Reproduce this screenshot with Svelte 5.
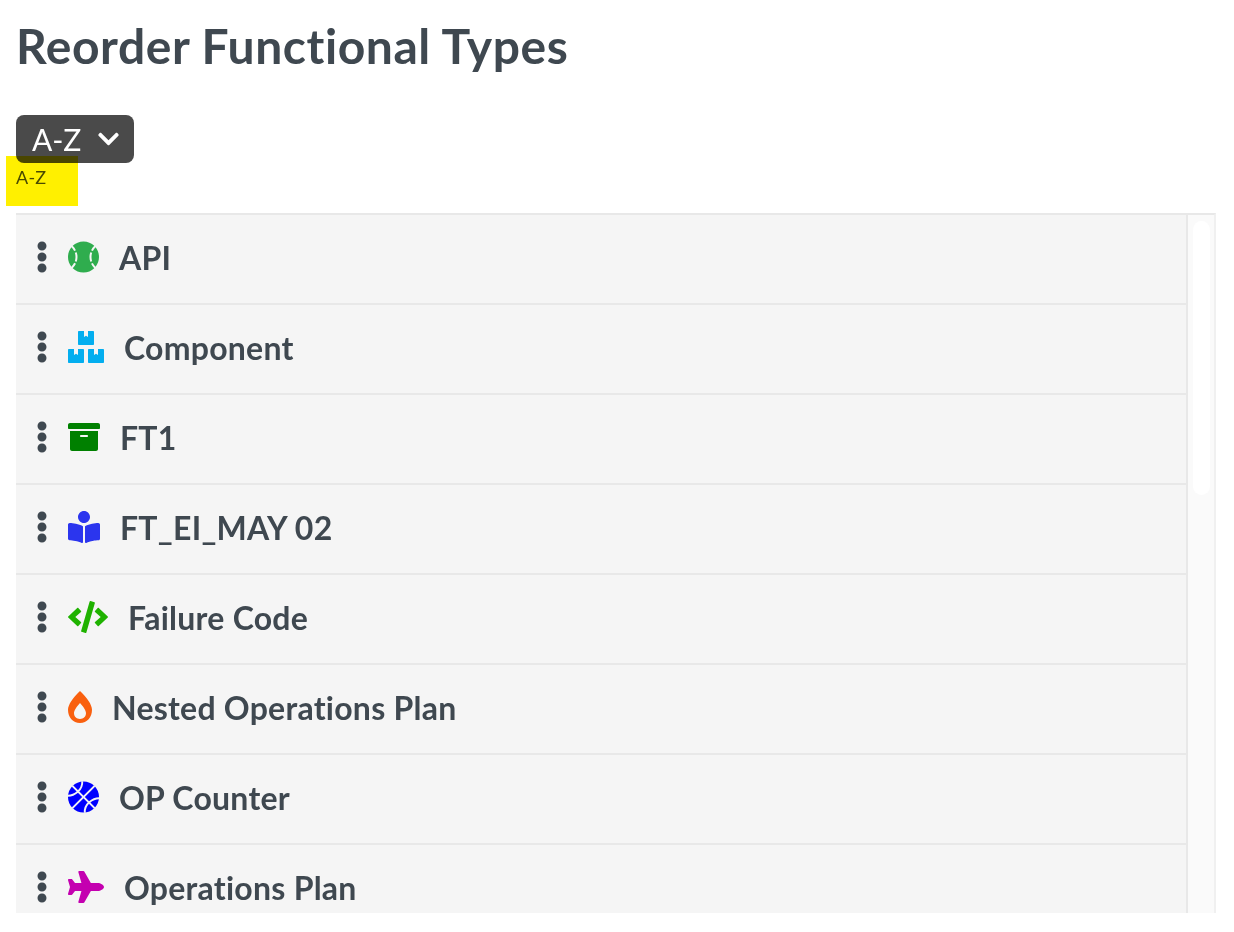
<script>
  const rows = [
    { name: 'API', icon: 'baseball', color: '#2fad4e' },
    { name: 'Component', icon: 'boxes', color: '#03aeef' },
    { name: 'FT1', icon: 'archive', color: '#008000' },
    { name: 'FT_EI_MAY 02', icon: 'reader', color: '#2b35ee' },
    { name: 'Failure Code', icon: 'code', color: '#1fb200' },
    { name: 'Nested Operations Plan', icon: 'burn', color: '#f9600f' },
    { name: 'OP Counter', icon: 'basketball', color: '#0000ff' },
    { name: 'Operations Plan', icon: 'plane', color: '#c400b0' }
  ];

  const icons = {
    baseball: { w: 496, d: 'M368.5 363.9l28.8-13.9c11.1 22.9 26 43.2 44.1 60.9 34-42.5 54.5-96.3 54.5-154.9 0-58.5-20.4-112.2-54.2-154.6-17.8 17.3-32.6 37.1-43.6 59.5l-28.7-14.1c12.8-26 30-49 50.8-69C375.6 34.7 315 8 248 8 181.1 8 120.5 34.6 75.9 77.7c20.7 19.9 37.9 42.9 50.7 68.8l-28.7 14.1c-11-22.3-25.7-42.1-43.5-59.4C20.4 143.7 0 197.4 0 256c0 58.6 20.4 112.3 54.4 154.7 18.2-17.7 33.2-38 44.3-61l28.8 13.9c-12.9 26.7-30.3 50.3-51.5 70.7 44.5 43.1 105.1 69.7 172 69.7 66.8 0 127.3-26.5 171.9-69.5-21.1-20.4-38.5-43.9-51.4-70.6zm-228.3-32l-30.5-9.8c14.9-46.4 12.7-93.8-.6-134l30.4-10c15 45.6 18 99.9.7 153.8zm216.3-153.4l30.4 10c-13.2 40.1-15.5 87.5-.6 134l-30.5 9.8c-17.3-54-14.3-108.3.7-153.8z' },
    boxes: { w: 576, d: 'M560 288h-80v96l-32-21.3-32 21.3v-96h-80c-8.8 0-16 7.2-16 16v192c0 8.8 7.2 16 16 16h224c8.8 0 16-7.2 16-16V304c0-8.8-7.2-16-16-16zm-384-64h224c8.8 0 16-7.2 16-16V16c0-8.8-7.2-16-16-16h-80v96l-32-21.3L256 96V0h-80c-8.8 0-16 7.2-16 16v192c0 8.8 7.2 16 16 16zm64 64h-80v96l-32-21.3L96 384v-96H16c-8.8 0-16 7.2-16 16v192c0 8.8 7.2 16 16 16h224c8.8 0 16-7.2 16-16V304c0-8.8-7.2-16-16-16z' },
    archive: { w: 512, d: 'M32 448c0 17.7 14.3 32 32 32h384c17.7 0 32-14.3 32-32V160H32v288zm160-212c0-6.6 5.4-12 12-12h104c6.6 0 12 5.4 12 12v8c0 6.6-5.4 12-12 12H204c-6.6 0-12-5.4-12-12v-8zM480 32H32C14.3 32 0 46.3 0 64v48c0 8.8 7.2 16 16 16h480c8.8 0 16-7.2 16-16V64c0-17.7-14.3-32-32-32z' },
    reader: { w: 512, d: 'M352 96c0-53.02-42.98-96-96-96s-96 42.98-96 96 42.98 96 96 96 96-42.98 96-96zM233.59 241.1c-59.33-36.32-155.43-46.3-203.79-49.05C13.55 191.13 0 203.51 0 219.14v222.8c0 14.33 11.59 26.28 26.49 27.05 43.66 2.29 131.99 10.68 193.04 41.43 9.37 4.72 20.48-1.71 20.48-11.87V252.56c-.01-4.67-2.32-8.95-6.42-11.46zm248.61-49.05c-48.35 2.74-144.46 12.73-203.78 49.05-4.1 2.51-6.41 6.96-6.41 11.63v245.79c0 10.19 11.14 16.63 20.54 11.9 61.04-30.72 149.32-39.11 192.97-41.4 14.9-.78 26.49-12.73 26.49-27.06V219.14c-.01-15.63-13.56-28.01-29.81-27.09z' },
    code: { w: 640, d: 'M278.9 511.5l-61-17.7c-6.4-1.8-10-8.5-8.2-14.9L346.2 8.7c1.8-6.4 8.5-10 14.9-8.2l61 17.7c6.4 1.8 10 8.5 8.2 14.9L293.8 503.3c-1.9 6.4-8.5 10.1-14.9 8.2zm-114-112.2l43.5-46.4c4.6-4.9 4.3-12.7-.8-17.2L117 256l90.6-79.7c5.1-4.5 5.5-12.3.8-17.2l-43.5-46.4c-4.5-4.8-12.1-5.1-17-.5L3.8 247.2c-5.1 4.7-5.1 12.8 0 17.5l144.1 135.1c4.9 4.6 12.5 4.4 17-.5zm327.2.6l144.1-135.1c5.1-4.7 5.1-12.8 0-17.5L492.1 112.1c-4.8-4.5-12.4-4.3-17 .5L431.6 159c-4.6 4.9-4.3 12.7.8 17.2L523 256l-90.6 79.7c-5.1 4.5-5.5 12.3-.8 17.2l43.5 46.4c4.5 4.9 12.1 5.1 17 .6z' },
    burn: { w: 384, d: 'M192 0C79.7 101.3 0 220.9 0 300.5 0 425 79 512 192 512s192-87 192-211.5c0-79.9-80.2-199.6-192-300.5zm0 448c-56.5 0-96-39-96-94.8 0-13.5 4.6-61.5 96-161.2 91.4 99.7 96 147.7 96 161.2 0 55.8-39.5 94.8-96 94.8z' },
    plane: { w: 576, d: 'M480 192H365.71L260.61 8.06A16.014 16.014 0 0 0 246.71 0h-65.5c-10.63 0-18.3 10.17-15.38 20.39L214.86 192H112l-43.2-57.6c-3.02-4.03-7.77-6.4-12.8-6.4H16.01C5.6 128-2.04 137.78.49 147.88L32 256 .49 364.12C-2.04 374.22 5.6 384 16.01 384H56c5.04 0 9.78-2.37 12.8-6.4L112 320h102.86l-49.03 171.6c-2.92 10.22 4.75 20.4 15.38 20.4h65.5c5.74 0 11.04-3.08 13.89-8.06L365.71 320H480c35.35 0 96-28.65 96-64s-60.65-64-96-64z' }
  };
</script>

<div class="page">
  <h1>Reorder Functional Types</h1>

  <button class="sort">
    <span>A-Z</span>
    <svg class="chevron" viewBox="0 0 448 512" aria-hidden="true">
      <path fill="currentColor" d="M207.029 381.476L12.686 187.132c-9.373-9.373-9.373-24.569 0-33.941l22.667-22.667c9.357-9.357 24.522-9.375 33.901-.04L224 284.505l154.745-154.021c9.379-9.335 24.544-9.317 33.901.04l22.667 22.667c9.373 9.373 9.373 24.569 0 33.941L240.971 381.476c-9.373 9.372-24.569 9.372-33.942 0z" />
    </svg>
  </button>
  <div class="highlight">A-Z</div>

  <div class="list">
    <div class="rows">
      {#each rows as row}
        <div class="row">
          <svg class="handle" viewBox="0 0 192 512" aria-hidden="true">
            <path fill="currentColor" d="M96 184c39.8 0 72 32.2 72 72s-32.2 72-72 72-72-32.2-72-72 32.2-72 72-72zM24 80c0 39.8 32.2 72 72 72s72-32.2 72-72S135.8 8 96 8 24 40.2 24 80zm0 352c0 39.8 32.2 72 72 72s72-32.2 72-72-32.2-72-72-72-72 32.2-72 72z" />
          </svg>
          {#if row.icon === 'basketball'}
            <svg class="icon" viewBox="0 0 496 512" aria-hidden="true">
              <circle cx="248" cy="256" r="248" fill={row.color} />
              <g fill="none" stroke="#f4f4f4" stroke-width="30">
                <path d="M70 434L426 78" />
                <path d="M70 78L426 434" />
                <path d="M228 4C232 70 204 130 156 172C112 210 56 236 0 236" />
                <path d="M268 508C264 442 292 382 340 340C384 302 440 276 496 276" />
              </g>
            </svg>
          {:else}
            <svg class="icon" viewBox="0 0 {icons[row.icon].w} 512" style:color={row.color} aria-hidden="true">
              <path fill="currentColor" d={icons[row.icon].d} />
            </svg>
          {/if}
          <span class="name">{row.name}</span>
        </div>
      {/each}
    </div>
    <div class="track">
      <div class="thumb"></div>
    </div>
  </div>
</div>

<style>
  :global(body) {
    margin: 0;
    background: #fff;
  }
  .page {
    box-sizing: border-box;
    display: flex;
    flex-direction: column;
    align-items: flex-start;
    height: 913px;
    padding: 0 18px 0 16px;
    overflow: hidden;
    font-family: Lato, "Liberation Sans", sans-serif;
    font-variant-ligatures: none;
    color: #3f4850;
  }
  h1 {
    margin: 18px 0 0;
    font-size: 48px;
    line-height: 56px;
    font-weight: 700;
    letter-spacing: 0.55px;
  }
  .sort {
    display: flex;
    align-items: center;
    gap: 17px;
    box-sizing: border-box;
    width: 118px;
    height: 48px;
    margin-top: 41px;
    padding: 0 16px;
    border: none;
    border-radius: 8px;
    background: #4a4a4a;
    color: #fff;
    font-family: inherit;
    font-size: 30px;
    font-weight: 400;
    white-space: nowrap;
  }
  .chevron {
    width: 21px;
    height: 24px;
    flex-shrink: 0;
  }
  .highlight {
    box-sizing: border-box;
    width: 72px;
    height: 50px;
    margin: -7px 0 0 -10px;
    padding: 11px 0 0 10px;
    background: #fff000;
    mix-blend-mode: multiply;
    font-size: 18px;
    line-height: 20px;
    letter-spacing: 0.3px;
    color: #4a4a00;
  }
  .list {
    display: flex;
    flex: 1;
    align-self: stretch;
    min-height: 0;
    margin-top: 7px;
    overflow: hidden;
    border-top: 2px solid #e8e8e8;
    border-right: 2px solid #f0f0f0;
  }
  .rows {
    flex: 1;
    min-width: 0;
    border-right: 2px solid #e8e8e8;
  }
  .row {
    display: flex;
    align-items: center;
    gap: 20px;
    box-sizing: border-box;
    height: 90px;
    padding: 0 0 4px 20px;
    background: #f5f5f5;
    border-bottom: 2px solid #e8e8e8;
  }
  .handle {
    width: 12px;
    height: 32px;
    flex-shrink: 0;
  }
  .icon {
    height: 32px;
    flex-shrink: 0;
  }
  .name {
    font-size: 32px;
    font-weight: 700;
    letter-spacing: 0.25px;
  }
  .track {
    flex-shrink: 0;
    width: 26px;
    padding: 6px 0 0 5px;
    box-sizing: border-box;
    background: #fafafa;
  }
  .thumb {
    width: 17px;
    height: 274px;
    border-radius: 9px;
    background: #fff;
  }
</style>
